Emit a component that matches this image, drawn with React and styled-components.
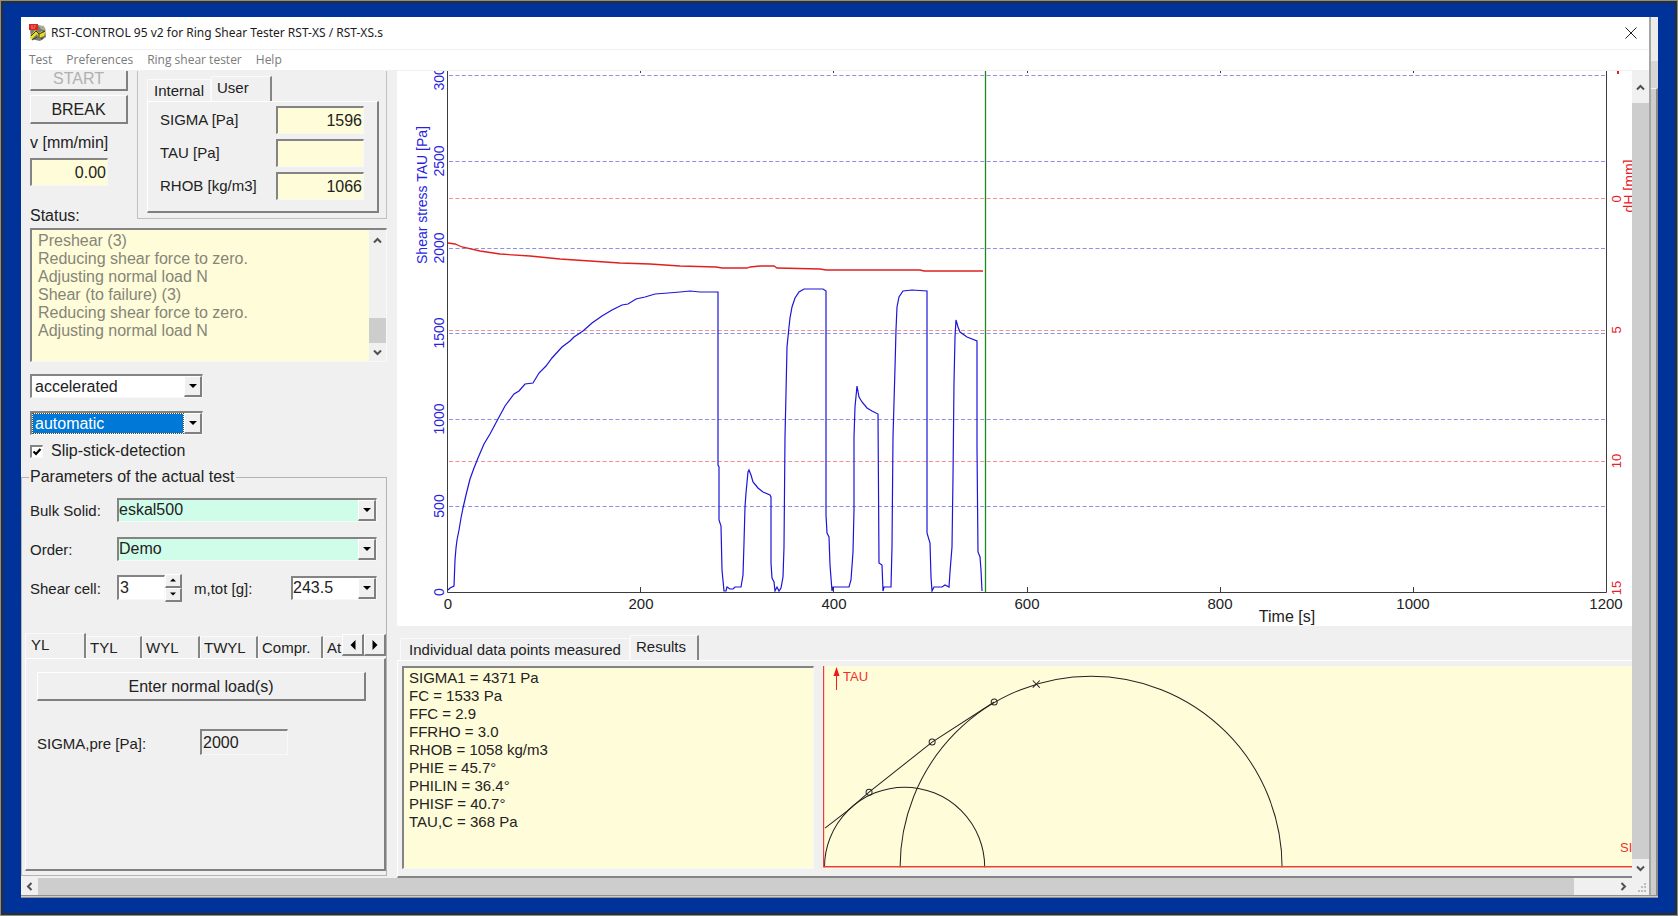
import React, { useState } from "react";
import styled, { createGlobalStyle, css } from "styled-components";

const GlobalStyle = createGlobalStyle`
  * {
    box-sizing: border-box;
  }

  body {
    margin: 0;
    color: #222;
    font-family: "Liberation Sans", Arial, sans-serif;
    font-size: 16px;
    line-height: 18px;
  }

  button, input, select, textarea {
    margin: 0;
    padding: 0;
    border: 0;
    border-radius: 0;
    background: none;
    color: inherit;
    font: inherit;
    outline: none;
  }
`;

const raised = css`
  border: solid;
  border-width: 1px 2px 2px 1px;
  border-color: #fff #808080 #808080 #fff;
`;

const sunken = css`
  border: solid;
  border-width: 2px 1px 1px 2px;
  border-color: #848484 #f8f8f8 #f8f8f8 #848484;
`;

const Desktop = styled.div`
  min-height: 100vh;
  display: flex;
  padding: 16px 19px 17px 20px;
  background: #003399;
  border: 1px solid #8f8f88;
  box-shadow: inset 0 0 0 2px #2a2f35;
`;

const Frame = styled.div`
  flex: 1;
  min-width: 0;
  display: flex;
  border-bottom: 3px double #909090;
  background: #ccc;
`;

const Window = styled.main`
  flex: 1;
  min-width: 0;
  display: flex;
  flex-direction: column;
  background: #f0f0f0;
`;

/* edge of the parent window that sticks out on the right */
const BackWindow = styled.div`
  width: 9px;
  display: flex;
  flex-direction: column;
  border-left: 2px solid #a6a6a6;
  background: #ececec;
`;

const BackWindowTitle = styled.div`
  height: 44px;
`;

const BackWindowMenu = styled.div`
  height: 27px;
  background: #d6d6d6;
`;

const BackWindowBody = styled.div`
  flex: 1;
  background: #cdcdcd;
  border-top: 1px solid #f4f4f4;
  border-right: 2px solid #8c8c8c;
`;

const TitleBar = styled.header`
  height: 33px;
  display: flex;
  align-items: center;
  gap: 4px;
  padding: 0 10px 0 8px;
  background: #fff;
  border-bottom: 1px solid #f0f0f0;
  font-family: "Noto Sans", "Open Sans", sans-serif;
  color: #1c1c1c;

  h1 {
    flex: 1;
    margin: 0;
    font-size: 12px;
    font-weight: 400;
  }

  button {
    width: 16px;
    height: 16px;
    display: flex;
    align-items: center;
    justify-content: center;
  }
`;

const MenuBar = styled.nav`
  height: 21px;
  display: flex;
  align-items: center;
  gap: 14px;
  padding: 0 8px;
  background: #fff;
  border-bottom: 1px solid #f0f0f0;

  button {
    font-family: "Open Sans", "Noto Sans", sans-serif;
    font-size: 12px;
    color: #7a7a7a;
  }
`;

const ScrollArea = styled.div`
  flex: 1;
  display: flex;
`;

const Viewport = styled.div`
  flex: 1;
  min-width: 0;
  display: flex;
  gap: 8px;
  overflow: hidden;
`;

const VScroll = styled.div`
  width: 17px;
  display: flex;
  flex-direction: column;
`;

const HScroll = styled.div`
  height: 17px;
  display: flex;
`;

const ScrollButton = styled.button`
  width: 17px;
  height: ${({ $height }) => $height || 17}px;
  flex: none;
  display: flex;
  align-items: center;
  justify-content: center;
`;

const Thumb = styled.div`
  flex: ${({ $size }) => ($size ? "none" : 1)};
  height: ${({ $size }) => ($size ? `${$size}px` : "auto")};
  background: #cdcdcd;
`;

const HTrack = styled.div`
  flex: 1;
  display: flex;
  padding-right: 41px;
`;

const Grip = styled.div`
  width: 17px;
  display: flex;
  align-items: flex-end;
  justify-content: flex-end;
  padding: 2px;
`;

/* the form is scrolled down a little, its first row is cut off */
const Side = styled.section`
  width: 368px;
  flex: none;
  margin-top: -9px;
  display: flex;
  flex-direction: column;
`;

const TopRow = styled.div`
  display: flex;
  align-items: flex-start;
  gap: 9px;
  padding-left: 9px;
`;

const Controls = styled.div`
  width: 98px;
  display: flex;
  flex-direction: column;
  gap: 4px;
`;

const Button = styled.button`
  ${raised}
  height: 29px;
  padding-top: 1px;
  background: #f0f0f0;

  &:disabled {
    padding-top: 5px;
    color: #b0b0b0;
  }
`;

const SpeedLabel = styled.label`
  margin-top: 6px;
  font-size: 16px;
  white-space: nowrap;
`;

const StatusLabel = styled.label`
  margin-top: 17px;
`;

const Field = styled.input`
  ${sunken}
  width: ${({ $width }) => $width}px;
  height: ${({ $height }) => $height || 28}px;
  padding: 0 1px;
  background: ${({ $color }) => $color || "#fffcd9"};
  text-align: ${({ $align }) => $align || "right"};
`;

const SpeedField = styled(Field)`
  margin-top: 2px;
`;

const Group = styled.div`
  width: 250px;
  height: 157px;
  padding: 13px 7px 5px 9px;
  border: 1px solid #c0c0c0;
`;

const Tabs = styled.div`
  display: flex;
  align-items: flex-end;
  overflow: hidden;
`;

const Tab = styled.button`
  flex: none;
  height: ${({ $active }) => ($active ? 25 : 22)}px;
  min-width: ${({ $width }) => $width}px;
  padding: ${({ $active }) => ($active ? "0 5px 3px" : "0 3px")};
  border: solid;
  border-width: 1px ${({ $edge }) => $edge || 2}px 0 1px;
  border-color: #fafafa ${({ $edge }) => ($edge === 1 ? "#fafafa" : "#858585")}
    #fafafa #fafafa;
  background: #f0f0f0;
  font-size: 15px;
  text-align: ${({ $edge }) => ($edge === 1 ? "center" : "left")};
  white-space: nowrap;
`;

const ValuePane = styled.div`
  ${raised}
  width: 232px;
  height: 112px;
  display: flex;
  flex-direction: column;
  gap: 5px;
  padding: 4px 13px 0 12px;
`;

const ValueRow = styled.label`
  display: flex;
  align-items: center;
  justify-content: space-between;
  font-size: 15px;

  input {
    font-size: 16px;
  }
`;

const StatusBox = styled.div`
  ${sunken}
  width: 357px;
  height: 134px;
  display: flex;
  margin: 3px 0 12px 9px;

  textarea {
    flex: 1;
    padding: 2px 6px;
    background: #fffcd9;
    color: #858578;
    resize: none;
    overflow: hidden;
  }
`;

const Track = styled.div`
  flex: 1;
  display: flex;
  flex-direction: column;
  justify-content: flex-end;
`;

const ModeList = styled.div`
  display: flex;
  flex-direction: column;
  align-items: flex-start;
  gap: 13px;
  padding-left: 9px;
`;

const ComboFrame = styled.div`
  ${sunken}
  width: ${({ $width }) => $width}px;
  height: 24px;
  display: flex;
  background: ${({ $color }) => $color || "#fff"};

  select {
    flex: 1;
    min-width: 0;
    padding-left: ${({ $indent }) => $indent || 0}px;
    appearance: none;
    ${({ $selected }) =>
      $selected &&
      css`
        margin: 1px;
        padding-left: 2px;
        background: #0078d7;
        color: #fff;
        outline: 1px dotted #5b4a2a;
      `}
  }
`;

const DropArrow = styled.span`
  ${raised}
  width: 18px;
  display: flex;
  align-items: center;
  justify-content: center;
  background: #f0f0f0;
  pointer-events: none;
`;

const CheckLabel = styled.label`
  display: flex;
  align-items: center;
  gap: 8px;
  margin: 7px 0 8px 9px;

  input {
    ${sunken}
    width: 13px;
    height: 13px;
    appearance: none;
    background: #fff;
  }

  input:checked {
    background: #fff
      url("data:image/svg+xml,%3Csvg xmlns='http://www.w3.org/2000/svg' viewBox='0 0 10 10'%3E%3Cpath d='M1.5 4.5 4 7 8.5 2' fill='none' stroke='%23000' stroke-width='2.2'/%3E%3C/svg%3E");
  }
`;

const Parameters = styled.fieldset`
  min-width: 0;
  width: 366px;
  height: 408px;
  margin: 0;
  padding: 11px 0 0 3px;
  border: 1px solid #b4b4b4;

  legend {
    margin-left: 4px;
    padding: 0 1px;
  }
`;

const ParamRow = styled.div`
  height: 25px;
  display: flex;
  align-items: center;
  margin: 0 0 14px 5px;
  font-size: 16px;

  label {
    width: 87px;
    padding-top: 3px;
    font-size: 15px;
  }
`;

const MassLabel = styled.label`
  && {
    width: 97px;
    margin-left: 12px;
  }
`;

const Spinner = styled.div`
  width: 17px;
  height: 28px;
  display: flex;
  flex-direction: column;

  button {
    ${raised}
    flex: 1;
    display: flex;
    align-items: center;
    justify-content: center;
  }
`;

const TestTabs = styled.div`
  display: flex;
  align-items: flex-end;
  margin-top: 33px;
`;

const TabScroller = styled.div`
  width: 44px;
  height: 24px;
  flex: none;
  display: flex;
  padding-bottom: 2px;

  button {
    ${raised}
    flex: 1;
    display: flex;
    align-items: center;
    justify-content: center;
  }
`;

const TestPane = styled.div`
  ${raised}
  height: 213px;
  display: flex;
  flex-direction: column;
  gap: 28px;
  padding: 13px 18px 0 11px;
`;

const PreRow = styled.div`
  display: flex;
  align-items: center;

  label {
    width: 163px;
    padding-top: 4px;
    font-size: 15px;
  }
`;

const Work = styled.section`
  flex: 1;
  min-width: 0;
  display: flex;
  flex-direction: column;
`;

const ChartBox = styled.div`
  background: #fff;
  margin-bottom: 9px;

  svg {
    display: block;
    width: 100%;
  }
`;

const ResultTabs = styled(Tabs)`
  padding-left: 3px;
`;

const ResultPane = styled.div`
  flex: 1;
  display: flex;
  gap: 9px;
  padding: 5px 0 7px 4px;
  border: solid;
  border-width: 1px 0 2px 1px;
  border-color: #fff #fff #858585 #fff;
`;

const ResultText = styled.textarea`
  ${sunken}
  flex: none;
  width: 412px;
  padding: 1px 5px;
  background: #fffcd9;
  font-size: 15px;
  line-height: 18px;
  resize: none;
  overflow: hidden;
`;

const MohrBox = styled.div`
  flex: 1;
  min-width: 0;
  background: #fffcd9;

  svg {
    display: block;
    width: 100%;
  }
`;

const statusLog = [
  "Preshear (3)",
  "Reducing shear force to zero.",
  "Adjusting normal load N",
  "Shear (to failure) (3)",
  "Reducing shear force to zero.",
  "Adjusting normal load N",
].join("\n");

const results = [
  "SIGMA1 = 4371 Pa",
  "FC = 1533 Pa",
  "FFC = 2.9",
  "FFRHO = 3.0",
  "RHOB = 1058 kg/m3",
  "PHIE = 45.7°",
  "PHILIN = 36.4°",
  "PHISF = 40.7°",
  "TAU,C = 368 Pa",
].join("\n");

const tauTrace = `
448,590 450,588 454,586 455,560 456,548 457,540 459,530 461,518 463,508 466,495
470,479 474,468 478,458 484,444 490,434 498,419 505,406 514,394 519,391 525,384
533,383 539,373 546,366 552,358 562,347 570,341 574,337 580,333 583,331 592,323
602,316 612,310 622,305 628,304 636,299 645,297 655,294 668,293 680,292 690,291
700,292 718,292 718,465 719,467 719,520 721,526 722,570 724,591 726,591 727,587
730,589 733,589 735,587 741,587 743,575 744,543 745,507 746,493 748,472 749,470
751,475 753,482 758,488 763,492 770,495 771,497 771,563 772,578 774,582 775,591
777,587 779,591 781,588 783,577 784,547 785,437 786,393 787,347 789,327 790,318
792,307 795,298 799,292 804,289 823,289 826,291 826,515 827,533 829,537 830,565
832,591 833,587 849,587 851,580 853,552 854,510 854,437 855,407 857,386 859,397
862,402 867,408 872,411 878,414 879,563 882,565 883,591 884,587 891,587 892,547
893,437 895,368 896,330 897,307 899,297 903,291 912,290 927,291 927,533 930,543
931,577 932,591 934,587 942,587 945,585 949,587 950,572 952,547 953,477 954,383
955,337 956,320 958,327 960,332 967,337 977,341 977,447 978,552 980,557 981,570
982,591`;

const heightTrace = `
448,243 455,244 462,247 480,251 500,254 530,256 560,259 590,261 620,263 650,264
680,266 716,267 722,268 747,268 750,267 760,266 774,266 777,268 820,269 826,270
920,270 924,271 983,271`;

const tauAxis = [
  { value: 3000, y: 75 },
  { value: 2500, y: 161 },
  { value: 2000, y: 248 },
  { value: 1500, y: 333 },
  { value: 1000, y: 419 },
  { value: 500, y: 506 },
  { value: 0, y: 592 },
];

const heightAxis = [
  { value: 0, y: 198, label: 199 },
  { value: 5, y: 330, label: 330 },
  { value: 10, y: 461, label: 461 },
  { value: 15, y: 592, label: 588 },
];

const Chevron = ({ turn = 0 }) => (
  <svg width="9" height="9" viewBox="0 0 9 9">
    <path
      d="M1 6.5 4.5 3 8 6.5"
      fill="none"
      stroke="#505050"
      strokeWidth="2"
      transform={`rotate(${turn} 4.5 4.5)`}
    />
  </svg>
);

const Triangle = ({ turn = 0, size = 8 }) => (
  <svg width={size} height={size} viewBox="0 0 8 8">
    <path d="M0 2H8L4 6Z" fill="#000" transform={`rotate(${turn} 4 4)`} />
  </svg>
);

const AppIcon = () => (
  <svg width="18" height="18" viewBox="0 0 18 18">
    <path d="M1 5 9 1l7 3 1 9-6 4-9-2Z" fill="#7d7c72" />
    <path d="M9 1l6 1 2 5-5-2Z" fill="#aaa99c" />
    <path d="M0 0h9v6H0Z" fill="#d8251f" />
    <path d="M2 2h2M5 2h2M2 4h4" stroke="#f08a80" />
    <path d="M1 13 6 6l4 3 3-2 1 2 3-3-2 6-5 2-2-4-6 6Z" fill="#e9dc25" />
    <path d="M2 12 7 7l3 3v4M10 10l6-3M3 16l5-3" fill="none" stroke="#3c3a12" />
    <path d="M11 14l4-1-2 3Z" fill="#54514d" />
  </svg>
);

function Combo({ id, label, value, ...frame }) {
  return (
    <ComboFrame {...frame}>
      <select id={id} aria-label={label} defaultValue={value}>
        <option>{value}</option>
      </select>
      <DropArrow>
        <Triangle />
      </DropArrow>
    </ComboFrame>
  );
}

function StressChart() {
  return (
    <ChartBox>
      <svg viewBox="397 71 1235 555" fontFamily="Liberation Sans, Arial, sans-serif">
        {tauAxis.slice(0, -1).map(({ value, y }) => (
          <path
            key={value}
            d={`M449 ${y + 0.5}H1606`}
            stroke="#8f8fe6"
            strokeDasharray="4 2.4"
          />
        ))}
        {heightAxis.slice(0, -1).map(({ value, y }) => (
          <path
            key={value}
            d={`M449 ${y + 0.5}H1606`}
            stroke="#f59090"
            strokeDasharray="4 2.4"
          />
        ))}
        <g fill="#2a1fe0" fontSize="14" textAnchor="middle">
          {tauAxis.map(({ value, y }) => (
            <text key={value} transform={`translate(444 ${y}) rotate(-90)`}>
              {value}
            </text>
          ))}
          <text transform="translate(427 195) rotate(-90)">Shear stress TAU [Pa]</text>
        </g>
        <g fill="#e8202a" fontSize="13" textAnchor="middle">
          {heightAxis.map(({ value, label }) => (
            <text key={value} transform={`translate(1621 ${label}) rotate(-90)`}>
              {value}
            </text>
          ))}
          <path d="M1617 71h2v3h-2Z" />
          <text fontSize="14" transform="translate(1634 186) rotate(-90)">
            dH [mm]
          </text>
        </g>
        <g fill="#222" fontSize="15" textAnchor="middle">
          {[0, 200, 400, 600, 800, 1000, 1200].map((t) => (
            <text key={t} x={448 + (t * 193) / 200} y="609">
              {t}
            </text>
          ))}
          <text x="1287" y="622" fontSize="16">
            Time [s]
          </text>
        </g>
        <path
          d="M447.500 71V592.500H1606.500V71M640.500 592V587M833.500 592V587M1027.500 592V587M1220.500 592V587M1413.500 592V587M640.500 71v2M833.500 71v2M1027.500 71v2M1220.500 71v2M1413.500 71v2"
          fill="none"
          stroke="#3c3c3c"
        />
        <polyline points={heightTrace} fill="none" stroke="#e02020" strokeWidth="1.3" />
        <polyline points={tauTrace} fill="none" stroke="#1c14d8" strokeWidth="1.2" />
        <path d="M985.500 71V592" stroke="#1c8a1c" strokeWidth="1.3" />
      </svg>
    </ChartBox>
  );
}

function MohrDiagram() {
  return (
    <MohrBox>
      <svg viewBox="823 666 808 202" fontFamily="Liberation Sans, Arial, sans-serif">
        <g fill="none" stroke="#222">
          <path d="M824.500 867A80 80 0 0 1 984.500 867" />
          <path d="M900 867A190.700 190.700 0 0 1 1281.500 867" />
          <path d="M825 828 847 811 869 792 932 742 994 702" />
          <circle cx="869" cy="792" r="3" />
          <circle cx="932" cy="742" r="3" />
          <circle cx="994" cy="702" r="3" />
          <path d="M1032.500 680.500l7 7M1032.500 687.500l7-7" />
        </g>
        <path d="M823.500 666V866.500H1631" fill="none" stroke="#f03c3c" strokeWidth="1.4" />
        <path d="M836.500 690V668" stroke="#f01818" />
        <path d="M836.500 667l3 9h-6Z" fill="#f01818" />
        <g fill="#f03030" fontSize="13">
          <text x="843" y="681">
            TAU
          </text>
          <text x="1619" y="852">
            SI
          </text>
        </g>
      </svg>
    </MohrBox>
  );
}

function SidePanel() {
  const [slipStick, setSlipStick] = useState(true);

  return (
    <Side>
      <TopRow>
        <Controls>
          <Button disabled>START</Button>
          <Button>BREAK</Button>
          <SpeedLabel htmlFor="speed">v [mm/min]</SpeedLabel>
          <SpeedField id="speed" $width={78} defaultValue="0.00" />
          <StatusLabel htmlFor="status">Status:</StatusLabel>
        </Controls>
        <Group>
          <Tabs>
            <Tab $width={64} $edge={1}>
              Internal
            </Tab>
            <Tab $width={61} $active>
              User
            </Tab>
          </Tabs>
          <ValuePane>
            <ValueRow>
              SIGMA [Pa]
              <Field $width={88} defaultValue="1596" />
            </ValueRow>
            <ValueRow>
              TAU [Pa]
              <Field $width={88} defaultValue="" />
            </ValueRow>
            <ValueRow>
              RHOB [kg/m3]
              <Field $width={88} defaultValue="1066" />
            </ValueRow>
          </ValuePane>
        </Group>
      </TopRow>

      <StatusBox>
        <textarea id="status" readOnly value={statusLog} />
        <VScroll>
          <ScrollButton aria-label="Scroll up" $height={20}>
            <Chevron />
          </ScrollButton>
          <Track>
            <Thumb $size={25} />
          </Track>
          <ScrollButton aria-label="Scroll down" $height={18}>
            <Chevron turn={180} />
          </ScrollButton>
        </VScroll>
      </StatusBox>

      <ModeList>
        <Combo label="Speed mode" value="accelerated" $width={173} $indent={3} />
        <Combo label="Control mode" value="automatic" $width={173} $selected />
      </ModeList>
      <CheckLabel>
        <input
          type="checkbox"
          checked={slipStick}
          onChange={(e) => setSlipStick(e.target.checked)}
        />
        Slip-stick-detection
      </CheckLabel>

      <Parameters>
        <legend>Parameters of the actual test</legend>
        <ParamRow>
          <label htmlFor="bulk">Bulk Solid:</label>
          <Combo id="bulk" value="eskal500" $width={260} $color="#d0fdea" />
        </ParamRow>
        <ParamRow>
          <label htmlFor="order">Order:</label>
          <Combo id="order" value="Demo" $width={260} $color="#d0fdea" />
        </ParamRow>
        <ParamRow>
          <label htmlFor="cell">Shear cell:</label>
          <Field id="cell" $width={48} $height={25} $color="#fff" $align="left" defaultValue="3" />
          <Spinner>
            <button aria-label="Increase">
              <Triangle turn={180} size={6} />
            </button>
            <button aria-label="Decrease">
              <Triangle size={6} />
            </button>
          </Spinner>
          <MassLabel htmlFor="mass">m,tot [g]:</MassLabel>
          <Combo id="mass" value="243.5" $width={86} />
        </ParamRow>

        <TestTabs>
          <Tabs>
            <Tab $width={61} $active>
              YL
            </Tab>
            <Tab $width={56}>TYL</Tab>
            <Tab $width={58}>WYL</Tab>
            <Tab $width={58}>TWYL</Tab>
            <Tab $width={65}>Compr.</Tab>
            <Tab $width={20}>At</Tab>
          </Tabs>
          <TabScroller>
            <button aria-label="Previous tabs">
              <Triangle turn={90} size={10} />
            </button>
            <button aria-label="Next tabs">
              <Triangle turn={-90} size={10} />
            </button>
          </TabScroller>
        </TestTabs>
        <TestPane>
          <Button>Enter normal load(s)</Button>
          <PreRow>
            <label htmlFor="sigmaPre">SIGMA,pre [Pa]:</label>
            <Field
              id="sigmaPre"
              $width={88}
              $height={26}
              $color="#f0f0f0"
              $align="left"
              readOnly
              value="2000"
            />
          </PreRow>
        </TestPane>
      </Parameters>
    </Side>
  );
}

export default function App() {
  return (
    <Desktop>
      <GlobalStyle />
      <Frame>
        <Window>
          <TitleBar>
            <AppIcon />
            <h1>RST-CONTROL 95 v2 for Ring Shear Tester RST-XS / RST-XS.s</h1>
            <button aria-label="Close">
              <svg width="12" height="12" viewBox="0 0 12 12">
                <path d="M0.500 0.500l11 11M11.500 0.500l-11 11" stroke="#222" />
              </svg>
            </button>
          </TitleBar>
          <MenuBar>
            <button>Test</button>
            <button>Preferences</button>
            <button>Ring shear tester</button>
            <button>Help</button>
          </MenuBar>

          <ScrollArea>
            <Viewport>
              <SidePanel />
              <Work>
                <StressChart />
                <ResultTabs>
                  <Tab $width={230} $edge={1}>
                    Individual data points measured
                  </Tab>
                  <Tab $width={69} $active>
                    Results
                  </Tab>
                </ResultTabs>
                <ResultPane>
                  <ResultText aria-label="Results" readOnly value={results} />
                  <MohrDiagram />
                </ResultPane>
              </Work>
            </Viewport>
            <VScroll>
              <ScrollButton aria-label="Scroll up" $height={32}>
                <Chevron />
              </ScrollButton>
              <Thumb />
              <ScrollButton aria-label="Scroll down" $height={19}>
                <Chevron turn={180} />
              </ScrollButton>
            </VScroll>
          </ScrollArea>
          <HScroll>
            <ScrollButton aria-label="Scroll left">
              <Chevron turn={-90} />
            </ScrollButton>
            <HTrack>
              <Thumb />
            </HTrack>
            <ScrollButton aria-label="Scroll right">
              <Chevron turn={90} />
            </ScrollButton>
            <Grip>
              <svg width="10" height="10" viewBox="0 0 10 10">
                <path
                  d="M7 0h2v2h-2ZM4 3h2v2h-2ZM7 3h2v2h-2ZM1 7h2v2h-2ZM4 7h2v2h-2ZM7 7h2v2h-2Z"
                  fill="#bdbdbd"
                />
              </svg>
            </Grip>
          </HScroll>
        </Window>
        <BackWindow>
          <BackWindowTitle />
          <BackWindowMenu />
          <BackWindowBody />
        </BackWindow>
      </Frame>
    </Desktop>
  );
}
